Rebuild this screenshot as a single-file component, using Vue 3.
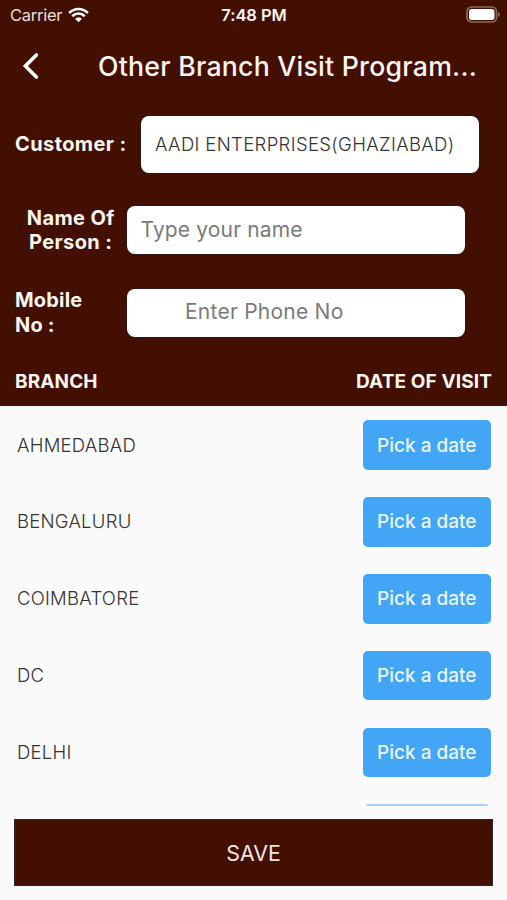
<script setup>
const branches = ['AHMEDABAD', 'BENGALURU', 'COIMBATORE', 'DC', 'DELHI']
</script>

<template>
  <div class="screen">
    <header class="top">
      <div class="status">
        <div class="carrier">
          <span class="carrier-name">Carrier</span>
          <svg class="wifi" viewBox="0 0 22 16" width="21" height="16">
            <path d="M1.2 6.1 C6.6 .3 15.4 .3 20.8 6.1" />
            <path d="M4.5 9.3 C8.2 5.5 13.8 5.5 17.5 9.3" />
            <path class="dot" d="M7.4 11.9 Q11 8.7 14.6 11.9 L11 15.6 Z" />
          </svg>
        </div>
        <span class="clock">7:48 PM</span>
        <svg class="battery" viewBox="0 0 34 17" width="34" height="17">
          <rect class="shell" x="1" y="1" width="29.5" height="15" rx="4.6" />
          <rect class="charge" x="3" y="3" width="25.5" height="11" rx="2.8" />
          <path class="tip" d="M32 6 Q33.8 6.8 33.8 8.5 Q33.8 10.2 32 11 Z" />
        </svg>
      </div>
      <div class="appbar">
        <svg class="back" viewBox="0 0 18 28" width="18" height="28">
          <path d="M15.4 3 L4.4 14 L15.4 25" />
        </svg>
        <h1 class="title">Other Branch Visit Program...</h1>
      </div>
      <div class="field customer">
        <span class="label">Customer :</span>
        <div class="box"><span>AADI ENTERPRISES(GHAZIABAD)</span></div>
      </div>
      <div class="field person">
        <span class="label">Name Of<br />Person :</span>
        <div class="box hint"><span>Type your name</span></div>
      </div>
      <div class="field mobile">
        <span class="label">Mobile<br />No :</span>
        <div class="box hint"><span>Enter Phone No</span></div>
      </div>
      <div class="columns">
        <span class="branch-head">BRANCH</span>
        <span class="date-head">DATE OF VISIT</span>
      </div>
    </header>
    <main class="list">
      <div v-for="b in branches" :key="b" class="row">
        <span class="name">{{ b }}</span>
        <button class="pick"><span>Pick a date</span></button>
      </div>
      <div class="next-edge"></div>
    </main>
    <footer class="bottom">
      <button class="save"><span>SAVE</span></button>
    </footer>
  </div>
</template>

<style>
body {
  background: #fafafa;
}
</style>

<style scoped>
.screen {
  width: 507px;
  height: 900px;
  display: flex;
  flex-direction: column;
  overflow: hidden;
  background: #fafafa;
  font-family: Inter, "Liberation Sans", sans-serif;
}
.screen * {
  box-sizing: border-box;
}
.screen span,
.title {
  white-space: nowrap;
}
.top {
  height: 406px;
  flex: none;
  background: #430f00;
  color: #fbf5f2;
  border-bottom: 1px solid #381c19;
}
.status {
  height: 30px;
  display: grid;
  grid-template-columns: 1fr auto 1fr;
  align-items: center;
  padding: 0 7px 2px 10px;
}
.carrier {
  display: flex;
  align-items: center;
  gap: 6px;
}
.carrier-name {
  width: 52px;
  padding-top: 2px;
  font-size: 16.5px;
  letter-spacing: -0.25px;
  color: #e9dfdb;
}
.wifi {
  margin-top: 1px;
}
.wifi path {
  fill: none;
  stroke: #fff;
  stroke-width: 2.8;
}
.wifi .dot {
  fill: #fff;
  stroke: none;
}
.clock {
  padding: 2px 2px 0 0;
  font-size: 16.5px;
  font-weight: 600;
  letter-spacing: -0.05px;
}
.battery {
  justify-self: end;
}
.shell {
  fill: none;
  stroke: #8a6b62;
  stroke-width: 1.7;
}
.charge {
  fill: #fff;
}
.tip {
  fill: #8a6b62;
}
.appbar {
  height: 72px;
  display: flex;
  align-items: center;
  padding-left: 21px;
}
.back path {
  fill: none;
  stroke: #fff;
  stroke-width: 3.6;
  stroke-linecap: round;
}
.title {
  margin: 0 0 0 59px;
  font-size: 26.7px;
  font-weight: 500;
  line-height: 32px;
  letter-spacing: 0.24px;
}
.field {
  display: flex;
  align-items: center;
}
.label {
  font-size: 20px;
  line-height: 24.5px;
  font-weight: 700;
  letter-spacing: 0.4px;
  flex: none;
}
.box {
  width: 338px;
  height: 48px;
  display: flex;
  align-items: center;
  padding-left: 14px;
  border-radius: 8px;
  background: #fff;
  box-shadow: 0 0 0 1px #301713;
}
.customer {
  margin-top: 14px;
  padding-left: 15px;
}
.customer .label {
  width: 126px;
}
.customer .box {
  height: 56.5px;
  font-size: 18.5px;
  letter-spacing: 0.35px;
  font-weight: 300;
  color: #333;
}
.person {
  margin-top: 33px;
  padding-left: 15px;
}
.person .label {
  width: 111.5px;
  text-align: center;
}
.hint {
  padding-bottom: 2px;
  font-size: 21px;
  letter-spacing: 0.15px;
  color: #7a7a7a;
}
.mobile {
  margin-top: 33.5px;
  padding-left: 15px;
}
.mobile .label {
  width: 111.5px;
  letter-spacing: 0.2px;
}
.mobile .box {
  padding-left: 58.5px;
  letter-spacing: 0.24px;
}
.columns {
  display: flex;
  justify-content: space-between;
  padding: 33px 15px 0;
  font-size: 19px;
  font-weight: 700;
  line-height: 24px;
  letter-spacing: 0.12px;
}
.list {
  height: 400px;
  flex: none;
  overflow: hidden;
  padding-top: 0.8px;
}
.row {
  height: 76.8px;
  display: flex;
  align-items: center;
  justify-content: space-between;
  padding: 0 16px 0 17px;
}
.name {
  padding-bottom: 1.4px;
  font-size: 18.5px;
  font-weight: 300;
  letter-spacing: 0.25px;
  color: #333;
}
button {
  font-family: inherit;
  margin: 0;
  padding: 0;
  border: 0;
}
.pick {
  width: 128.5px;
  height: 49.5px;
  border-radius: 5px;
  background: #42a5f5;
  color: #e9f6ff;
  font-size: 19px;
  font-weight: 500;
}
.next-edge {
  width: 122px;
  height: 2px;
  margin: 13.2px 19px 0 auto;
  border-radius: 2px 2px 0 0;
  background: #a9cdf6;
}
.bottom {
  padding: 13px 14px 0 14px;
}
.save {
  display: block;
  width: 479px;
  height: 67px;
  background: #430f00;
  border: 1px solid #302625;
  color: #f0e7e3;
  font-size: 21.3px;
}
</style>
